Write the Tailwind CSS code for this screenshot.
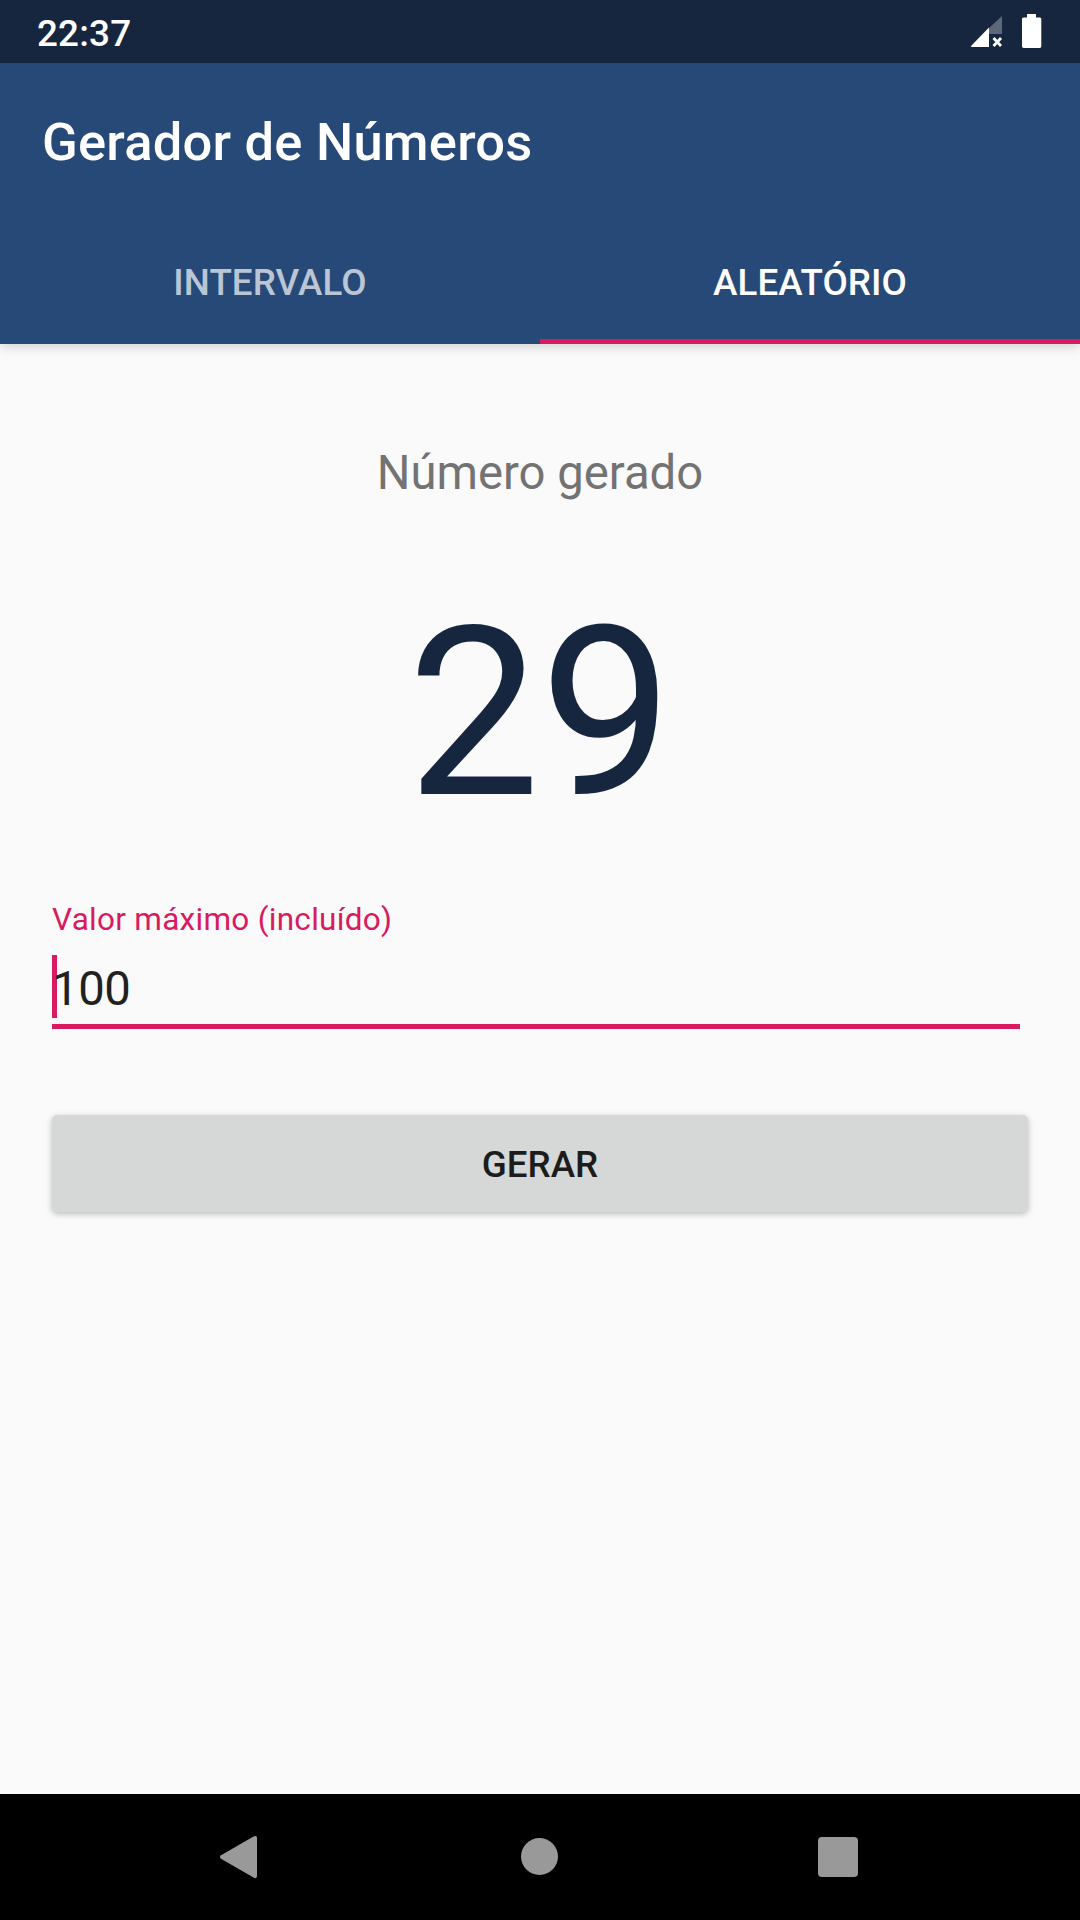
<!DOCTYPE html>
<html lang="pt-BR">

<head>
  <meta charset="UTF-8" />
  <meta name="viewport" content="width=device-width, initial-scale=1" />
  <script src="https://cdn.jsdelivr.net/npm/@tailwindcss/browser@4"></script>
  <title>Gerador de Números</title>
</head>

<body class="w-[1080px] h-[1920px] flex flex-col overflow-hidden bg-[#fafafa] font-['Roboto',sans-serif]">
  <!-- Status bar -->
  <div class="relative z-10 h-[63px] shrink-0 flex items-start justify-between bg-[#16263f] text-white pl-[37px] pr-[38px]">
    <span class="text-[36.75px] leading-[68px] tracking-[0.2px] font-medium">22:37</span>
    <div class="flex gap-[19px] pt-[14px]">
      <svg class="w-[33px] h-[34px]" viewBox="0 0 33 34" fill="none">
        <path d="M32 2L19 14V20H32Z" fill="#fff" fill-opacity=".3" />
        <path d="M1.500 33Q.600 32.500 1.500 31.500L19 13.500V33Z" fill="#fff" />
        <path d="M23.500 24L31 32M31 24L23.500 32" stroke="#fff" stroke-width="2.8" />
      </svg>
      <svg class="w-[20px] h-[34px]" viewBox="0 0 20 34">
        <path d="M5 0H14V3.500H18Q19.300 3.500 19.300 5V32.300Q19.300 34 18 34H1.500Q0 34 0 32.300V5Q0 3.500 1.500 3.500H5Z" fill="#fff" />
      </svg>
    </div>
  </div>

  <!-- App bar -->
  <header class="h-[281px] shrink-0 flex flex-col bg-[#274978] text-white shadow-[0_3px_11px_rgba(0,0,0,0.16)]">
    <h1 class="pt-[39px] pl-[42px] text-[52.5px] leading-[80px] tracking-[0.22px] font-medium">Gerador de Números</h1>
    <nav class="mt-auto h-[126px] grid grid-cols-2 text-center text-[36.75px] leading-[129px] tracking-[0.1px] font-medium">
      <a class="text-white/70">INTERVALO</a>
      <a class="h-[126px] border-b-5 border-[#d81b60]">ALEATÓRIO</a>
    </nav>
  </header>

  <main class="flex-1 flex flex-col">
    <p class="mt-[99px] text-center text-[47.25px] leading-[60px] text-[#737373]">Número gerado</p>
    <p class="mt-[71px] text-center text-[236.25px] leading-[280px] text-[#16263f]">29</p>

    <div class="mt-[46px] ml-[52px] w-[968px] h-[129px] border-b-5 border-[#d81b60]">
      <label class="block text-[31.5px] leading-[40px] tracking-[0.28px] text-[#d81b60]">Valor máximo (incluído)</label>
      <div class="relative mt-[15px] h-[63px] border-l-5 border-[#d81b60]">
        <span class="relative -left-[5px] text-[47.25px] leading-[68px] tracking-[-0.4px] text-[#212121]">100</span>
      </div>
    </div>

    <button class="mt-[86px] mx-[52px] h-[97px] rounded-[5px] bg-[#d6d8d7] text-[36.75px] leading-[99px] font-medium text-[#1c1c1c] shadow-[0_2px_6px_rgba(0,0,0,0.26)]">GERAR</button>
  </main>

  <!-- Navigation bar -->
  <div class="h-[126px] shrink-0 grid grid-cols-[302px_516px_262px] items-center bg-black">
    <svg class="ml-[219px] w-[38px] h-[44px]" viewBox="0 0 38 44" fill="#999">
      <path d="M34.500 1.500Q38 -.200 38 3V41Q38 44.300 34.500 42.500L2 23.800Q0 22 2 20.200Z" />
    </svg>
    <div class="ml-[219px] mb-px w-[37px] h-[37px] rounded-full bg-[#999]"></div>
    <div class="w-[40px] h-[40px] rounded-[4px] bg-[#999]"></div>
  </div>
</body>

</html>
